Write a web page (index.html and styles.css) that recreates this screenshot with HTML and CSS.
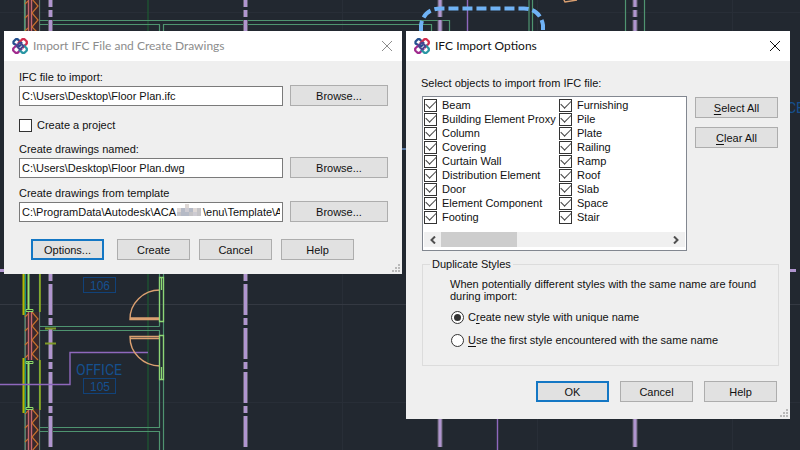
FILE: index.html
```html
<!DOCTYPE html>
<html lang="en">
<head>
<meta charset="utf-8">
<title>IFC Import</title>
<link rel="stylesheet" href="styles.css">
</head>
<body>
<svg class="plan" viewBox="0 0 800 450" preserveAspectRatio="xMinYMin slice" aria-hidden="true">
  <defs>
    <g id="brick">
      <rect x="26" width="13" height="48" y="0" fill="#39282c"/>
      <path d="M25.500 0V48M39.500 0V48" stroke="#68756f"/>
      <path d="M28.500 0V48M31.500 0V48" stroke="#c86870" stroke-width="1.400"/>
      <path d="M32 0L38 7L32 14L38 21L32 28L38 35L32 42L38 48M25 5L28 2M25 19L28 16M25 33L28 30M25 46L28 43" fill="none" stroke="#c8702c" stroke-width="1.200"/>
    </g>
    <g id="window">
      <path d="M23.500 0V55" stroke="#b0b900" stroke-width="2"/>
      <path d="M25.500 0V55" stroke="#169080"/>
      <path d="M28.500 4V50" stroke="#9be26b" stroke-width="2"/>
      <path d="M40 2V52" stroke="#95b51d" stroke-width="1.500"/>
      <path d="M26 3.500H33V5.500H26ZM26 49.500H33V51.500H26Z" fill="none" stroke="#8cda68"/>
    </g>
  </defs>
  <rect width="800" height="450" fill="#222830"/>
  <path d="M0 12.500H800M0 402.500H800M342.500 0V450M537.500 0V450M732.500 0V450" stroke="#282e37"/>
  <path d="M0 304.500H800" stroke="#343942"/>
  <path d="M148 0V450" stroke="#1e5632" stroke-width="1.300"/>
  <g fill="none" stroke="#4f9470" stroke-width="1.200">
    <path d="M40 20.500H449.500V32M40 24.500H159.500V32M163.500 32V24.500H431.500V32M529 0V32M532.500 0V32M625.500 0V32M644.500 0V32"/>
    <path d="M40 326.500H159.500M40 330.500H159.500V427.500H40M163.500 274V450M159.500 274V326.500M40 431.500H159.500V450"/>
    <path d="M24.500 0V32M39.500 0V32M25 274V450M39.500 274V450"/>
  </g>
  <use href="#brick" y="-15"/>
  <use href="#brick" y="312"/>
  <use href="#brick" y="409"/>
  <use href="#window" y="260"/>
  <use href="#window" y="358"/>
  <g stroke="#666371" stroke-width="5" stroke-dasharray="31 3 7 3">
    <path d="M50.500 -24V450M245.500 -24V450M440 -24V450M635 -24V450"/>
  </g>
  <g stroke="#b095cf" stroke-width="3" stroke-dasharray="31 3 7 3">
    <path d="M50.500 -24V450M245.500 -24V450M440 -24V450M635 -24V450"/>
  </g>
  <path d="M45 328.500H56M45 343.500H56" stroke="#7d9827" stroke-width="2"/>
  <path d="M0 384.500H70V352.500H148M467.500 0V32M497.500 418V450" fill="none" stroke="#8f68bd" stroke-width="1.400"/>
  <path d="M0 270.500H4M790 270.500H796" stroke="#b095cf" stroke-width="3"/>
  <g fill="none" stroke="#dba071" stroke-width="1.400">
    <path d="M160 290A30 29 0 0 0 130 319.500H160M130 318H160"/>
    <path d="M160 366A30 29 0 0 1 130 336.500H160M130 338.500H160"/>
    <path d="M563 -2L565 2L577 0"/>
  </g>
  <path d="M159.500 277.500H163.500V321.500H159.500ZM161.500 278V290M159.500 335.500H163.500V379.500H159.500ZM161.500 367V379" fill="none" stroke="#8dd675" stroke-width="1.300"/>
  <path d="M421 31V25Q424 8.500 441 8.500H524Q540 9 543 25V31" fill="none" stroke="#70b3f6" stroke-width="4" stroke-dasharray="10 4"/>
  <path d="M402 149H406" stroke="#58779f" stroke-width="2"/>
  <g class="room">
    <rect x="83.500" y="277.500" width="32" height="15"/>
    <rect x="83.500" y="378.500" width="32" height="15"/>
    <text x="100" y="290">106</text>
    <text x="100" y="391">105</text>
    <text class="room-name" x="99" y="375">OFFICE</text>
    <text class="room-name" x="781" y="113">OFFICE</text>
  </g>
</svg>

<svg class="symbols" aria-hidden="true">
  <symbol id="ifc" viewBox="0 0 16 16">
    <g fill="none" stroke-width="2.300" stroke-linejoin="bevel">
      <path stroke="#24508f" d="M9 6.500L7 8.500L1.500 5.500V3.500L4 1.200H5.500L10 5.500"/>
      <path stroke="#d32d50" d="M6 5.500L10.500 1.200H12.500L14.800 3.500V5.500L10.500 10"/>
      <path stroke="#a02b8e" d="M10 10.500L5.500 14.800H3.500L1.200 12.500V10.500L6 6"/>
      <path stroke="#2996a4" d="M7 11.500L10.500 14.800H12.500L14.800 12.500V10.500L11.500 7"/>
      <path stroke="#4a4590" stroke-width="2" d="M4.500 8L8 4.500L11.500 8L8 11.500Z"/>
    </g>
  </symbol>
  <symbol id="close" viewBox="0 0 10 10">
    <path d="M0 0L10 10M10 0L0 10" fill="none" stroke="currentColor"/>
  </symbol>
  <symbol id="grip" viewBox="0 0 8 8">
    <path d="M6 0h2v2h-2zM3 3h2v2h-2zM6 3h2v2h-2zM0 6h2v2h-2zM3 6h2v2h-2zM6 6h2v2h-2z" fill="#b9b9b9"/>
  </symbol>
</svg>

<section class="dialog import" aria-labelledby="import-title">
  <header class="titlebar inactive">
    <svg class="logo" aria-hidden="true"><use href="#ifc"/></svg>
    <h1 id="import-title">Import IFC File and Create Drawings</h1>
    <button class="close" type="button" aria-label="Close"><svg><use href="#close"/></svg></button>
  </header>
  <form class="import-body">
    <label for="ifc-file">IFC file to import:</label>
    <div class="file-row">
      <input id="ifc-file" type="text" value="C:\Users\Desktop\Floor Plan.ifc">
      <button class="btn" type="button">Browse...</button>
    </div>
    <label class="check project"><input type="checkbox">Create a project</label>
    <label for="drawings">Create drawings named:</label>
    <div class="file-row drawing-row">
      <input id="drawings" type="text" value="C:\Users\Desktop\Floor Plan.dwg">
      <button class="btn" type="button">Browse...</button>
    </div>
    <label for="template">Create drawings from template</label>
    <div class="file-row">
      <input id="template" type="text" value="C:\ProgramData\Autodesk\ACA         \enu\Template\A">
      <svg class="mosaic" viewBox="0 0 26 16" aria-hidden="true">
        <path d="M0 4h4v4h-4zM8 0h4v4h-4zM16 4h4v4h-4z" fill="#ded8d6"/>
        <path d="M4 8h4v4h-4zM4 4h4v4h-4zM12 4h4v4h-4zM8 8h4v4h-4z" fill="#b5bac6"/>
        <path d="M8 4h4v4h-4zM16 8h4v4h-4z" fill="#cdcbd2"/>
        <path d="M0 8h4v4h-4zM12 8h4v4h-4zM20 4h4v8h-4z" fill="#c4c3c6"/>
      </svg>
      <button class="btn" type="button">Browse...</button>
    </div>
    <div class="actions">
      <button class="btn default" type="button">Options...</button>
      <button class="btn" type="button">Create</button>
      <button class="btn" type="button">Cancel</button>
      <button class="btn" type="button">Help</button>
    </div>
  </form>
  <svg class="grip" aria-hidden="true"><use href="#grip"/></svg>
</section>

<section class="dialog options" aria-labelledby="options-title">
  <header class="titlebar">
    <svg class="logo" aria-hidden="true"><use href="#ifc"/></svg>
    <h1 id="options-title">IFC Import Options</h1>
    <button class="close" type="button" aria-label="Close"><svg><use href="#close"/></svg></button>
  </header>
  <form class="options-body">
    <p id="objects-label">Select objects to import from IFC file:</p>
    <div class="objects">
      <div class="listbox" role="group" aria-labelledby="objects-label">
        <div class="columns">
          <div class="column">
            <label class="check"><input type="checkbox" checked>Beam</label>
            <label class="check"><input type="checkbox" checked>Building Element Proxy</label>
            <label class="check"><input type="checkbox" checked>Column</label>
            <label class="check"><input type="checkbox" checked>Covering</label>
            <label class="check"><input type="checkbox" checked>Curtain Wall</label>
            <label class="check"><input type="checkbox" checked>Distribution Element</label>
            <label class="check"><input type="checkbox" checked>Door</label>
            <label class="check"><input type="checkbox" checked>Element Component</label>
            <label class="check"><input type="checkbox" checked>Footing</label>
          </div>
          <div class="column">
            <label class="check"><input type="checkbox" checked>Furnishing</label>
            <label class="check"><input type="checkbox" checked>Pile</label>
            <label class="check"><input type="checkbox" checked>Plate</label>
            <label class="check"><input type="checkbox" checked>Railing</label>
            <label class="check"><input type="checkbox" checked>Ramp</label>
            <label class="check"><input type="checkbox" checked>Roof</label>
            <label class="check"><input type="checkbox" checked>Slab</label>
            <label class="check"><input type="checkbox" checked>Space</label>
            <label class="check"><input type="checkbox" checked>Stair</label>
          </div>
        </div>
        <div class="scrollbar" aria-hidden="true">
          <svg viewBox="0 0 6 8"><path d="M5 0.500L1.500 4L5 7.500"/></svg>
          <span class="thumb"></span>
          <svg viewBox="0 0 6 8"><path d="M1 0.500L4.500 4L1 7.500"/></svg>
        </div>
      </div>
      <div class="side">
        <button class="btn" type="button"><u>S</u>elect All</button>
        <button class="btn" type="button"><u>C</u>lear All</button>
      </div>
    </div>
    <fieldset>
      <legend>Duplicate Styles</legend>
      <p>When potentially different styles with the same name are found during import:</p>
      <label class="radio"><input type="radio" name="dup" checked><span>C<u>r</u>eate new style with unique name</span></label>
      <label class="radio"><input type="radio" name="dup"><span><u>U</u>se the first style encountered with the same name</span></label>
    </fieldset>
    <div class="actions">
      <button class="btn default" type="button">OK</button>
      <button class="btn" type="button">Cancel</button>
      <button class="btn" type="button">Help</button>
    </div>
  </form>
  <svg class="grip" aria-hidden="true"><use href="#grip"/></svg>
</section>
</body>
</html>
```
FILE: styles.css
```css
* {
  box-sizing: border-box;
}

body {
  margin: 0;
  min-height: 100vh;
  position: relative;
  overflow: hidden;
  background: #222830;
  color: #111;
  font: 11px/16px "Liberation Sans", Arial, sans-serif;
}

button,
input {
  margin: 0;
  font: inherit;
  color: inherit;
}

p {
  margin: 0;
}

.plan {
  position: absolute;
  inset: 0;
  width: 100%;
  height: 100%;
}

.symbols {
  position: absolute;
  width: 0;
  height: 0;
}

.room {
  fill: none;
  stroke: #114279;
}

.room text {
  fill: #15508f;
  stroke: none;
  font: 12px "Liberation Sans", sans-serif;
  text-anchor: middle;
}

.room .room-name {
  font: 14px Roboto, sans-serif;
}

.dialog {
  position: absolute;
  top: 31px;
  background: #efefef;
}

.import {
  left: 4px;
  width: 398px;
}

.options {
  left: 406px;
  width: 384px;
}

.titlebar {
  display: flex;
  align-items: center;
  height: 30px;
  padding: 0 10px 0 8px;
  gap: 5px;
  background: #fff;
}

.titlebar h1 {
  flex: 1;
  margin: 0;
  font: 12px/16px Lato, "Open Sans", sans-serif;
}

.inactive h1,
.inactive .close {
  color: #8c8c8c;
}

.logo {
  width: 16px;
  height: 16px;
}

.close {
  display: flex;
  padding: 0;
  border: 0;
  background: none;
}

.close svg {
  width: 10px;
  height: 10px;
}

.import-body {
  display: flex;
  flex-direction: column;
  padding: 8px 14px 14px 15px;
}

.file-row {
  display: flex;
  align-items: flex-end;
  gap: 7px;
  position: relative;
}

.file-row input {
  flex: 1;
  min-width: 0;
  height: 20px;
  padding: 0 2px;
  border: 1px solid #7a7a7a;
  border-radius: 0;
  background: #fff;
}

.file-row .btn {
  width: 98px;
}

.mosaic {
  position: absolute;
  left: 158px;
  top: 3px;
  width: 26px;
  height: 16px;
}

.btn {
  height: 21px;
  padding: 0;
  border: 1px solid #adadad;
  border-radius: 0;
  background: #e1e1e1;
  line-height: 16px;
}

.default {
  border: 2px solid #1477c4;
}

.check {
  display: flex;
  align-items: center;
  gap: 5px;
  white-space: nowrap;
}

.project {
  margin: 11px 0 8px;
}

.drawing-row {
  margin-bottom: 7px;
}

input[type="checkbox"],
input[type="radio"] {
  appearance: none;
  display: grid;
  place-items: center;
  flex: none;
  width: 13px;
  height: 13px;
  border: 1px solid #333;
  background: #fff;
}

input[type="checkbox"]:checked::before {
  content: "";
  width: 9px;
  height: 5px;
  margin-top: -4px;
  border: solid #444;
  border-width: 0 0 1px 1px;
  transform: rotate(-45deg);
}

input[type="radio"] {
  border-radius: 50%;
}

input[type="radio"]:checked::before {
  content: "";
  width: 7px;
  height: 7px;
  border-radius: 50%;
  background: #333;
}

.actions {
  display: flex;
  gap: 9px;
}

.actions .btn {
  width: 73px;
}

.import .actions {
  margin: 17px 0 0 12px;
}

.import .default {
  margin-right: 4px;
}

.grip {
  position: absolute;
  right: 2px;
  bottom: 2px;
  width: 8px;
  height: 8px;
}

.options-body {
  padding: 14px 11px 17px 15px;
}

.objects {
  display: flex;
  gap: 8px;
  margin: 5px 0 0 1px;
}

.listbox {
  flex: 1;
  padding: 1px;
  border: 1px solid #828790;
  background: #fff;
}

.columns {
  display: grid;
  grid-template-columns: 135px 1fr;
}

.column .check {
  height: 14px;
  line-height: 14px;
}

.scrollbar {
  display: flex;
  align-items: center;
  height: 15px;
  margin: 8px 0 2px;
  padding: 0 6px;
  gap: 5px;
  background: #f0f0f0;
}

.scrollbar svg {
  width: 6px;
  height: 8px;
  fill: none;
  stroke: #505050;
  stroke-width: 2;
}

.scrollbar svg:last-child {
  margin-left: auto;
}

.thumb {
  width: 76px;
  height: 15px;
  background: #cdcdcd;
}

.side {
  display: flex;
  flex-direction: column;
  gap: 9px;
  width: 83px;
  padding-top: 1px;
  margin-right: 1px;
}

u {
  text-underline-offset: 2px;
}

fieldset {
  min-width: 0;
  margin: 5px 0 0 1px;
  padding: 6px 20px 17px 27px;
  border: 1px solid #dcdcdc;
}

legend {
  margin-left: -20px;
  padding: 0 2px;
}

fieldset p {
  line-height: 12px;
}

.radio {
  display: flex;
  align-items: center;
  gap: 4px;
  margin: 7px 0 0 1px;
}

.options .actions {
  justify-content: flex-end;
  gap: 11px;
  margin: 15px 2px 0 0;
}
```
